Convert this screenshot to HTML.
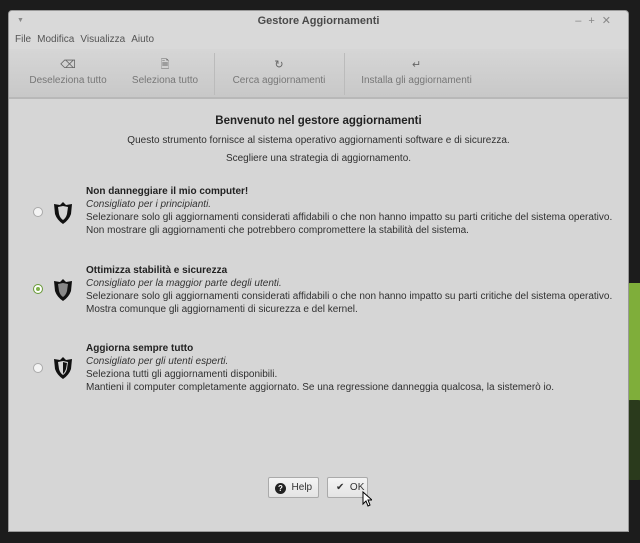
<!DOCTYPE html>
<html><head><style>
*{margin:0;padding:0;box-sizing:border-box}
body{width:640px;height:543px;background:#1c1c1c;position:relative;overflow:hidden;font-family:"Liberation Sans","DejaVu Sans",sans-serif;font-size:10px;color:#303030;white-space:nowrap}
.green{position:absolute;left:620px;top:283px;width:30px;height:120px;background:#7fae3a;border-radius:10px}
.green2{position:absolute;left:620px;top:400px;width:28px;height:80px;background:#2a3a1c;border-radius:10px}
.win{position:absolute;left:8px;top:10px;width:621px;height:522px;background:#d6d6d6;border:1px solid #999;border-radius:4px 4px 0 0;overflow:hidden}
.title{height:20px;background:#d9d9d9;text-align:center;font-weight:bold;font-size:11px;color:#4a4a4a;line-height:20px;position:relative}
.title .l{position:absolute;left:8px;top:0;font-size:7px;color:#888}
.title .r{position:absolute;right:10px;top:0;color:#888;font-weight:normal;letter-spacing:7px}
.menu{height:18px;background:#d9d9d9;font-size:10px;color:#555;padding-left:6px;line-height:18px}
.menu span{margin-right:6px}
.tb{height:50px;background:linear-gradient(#d6d6d6,#c8c8c8);border-bottom:2px solid #b8b8b8;position:relative;color:#777;font-size:10px}
.tb div{position:absolute;top:4px;text-align:center}
.tb i{display:block;font-style:normal;font-size:11px;color:#666;height:22px;line-height:24px}
.sep{position:absolute;top:4px;width:1px;height:42px;background:#bbb}
.h{position:absolute;width:100%;text-align:center}
.opt{position:absolute;left:77px;line-height:13px;font-size:10px}
.opt b{color:#222}
.opt em{color:#333}
.radio{position:absolute;left:24px;width:10px;height:10px;border-radius:50%;background:#f4f4f4;border:1px solid #aaa}
.btn{position:absolute;top:466px;height:21px;background:linear-gradient(#f4f4f4,#e4e4e4);border:1px solid #aaa;border-radius:2px;font-size:10px;line-height:19px;color:#333}
</style></head><body>
<div class="green"></div><div class="green2"></div>
<div class="win">
<div class="title"><span class="l">▼</span>Gestore Aggiornamenti<span class="r">–+✕</span></div>
<div class="menu"><span>File</span><span>Modifica</span><span>Visualizza</span><span>Aiuto</span></div>
<div class="tb">
<div style="left:17px;width:84px"><i>⌫</i>Deseleziona tutto</div>
<div style="left:120px;width:72px"><i>🗎</i>Seleziona tutto</div>
<div class="sep" style="left:205px"></div>
<div style="left:221px;width:98px"><i>↻</i>Cerca aggiornamenti</div>
<div class="sep" style="left:335px"></div>
<div style="left:350px;width:115px"><i>↵</i>Installa gli aggiornamenti</div>
</div>
<div class="h" style="top:104px;font-weight:bold;font-size:11.5px;color:#222">Benvenuto nel gestore aggiornamenti</div>
<div class="h" style="top:124px;font-size:10px">Questo strumento fornisce al sistema operativo aggiornamenti software e di sicurezza.</div>
<div class="h" style="top:142px;font-size:10px">Scegliere una strategia di aggiornamento.</div>

<div class="radio" style="top:196px"></div>
<svg style="position:absolute;left:44px;top:190px" width="20" height="24" viewBox="0 0 20 24"><path d="M10 1 L13 4 L19 3 L18 13 Q16 19 10 23 Q4 19 2 13 L1 3 L7 4 Z" fill="#111"/><path d="M10 5 L15 6 L14 13 Q13 17 10 19 Q7 17 6 13 L5 6 Z" fill="#d6d6d6"/></svg>
<div class="opt" style="top:174px"><b>Non danneggiare il mio computer!</b><br><em>Consigliato per i principianti.</em><br>Selezionare solo gli aggiornamenti considerati affidabili o che non hanno impatto su parti critiche del sistema operativo.<br>Non mostrare gli aggiornamenti che potrebbero compromettere la stabilità del sistema.</div>

<div class="radio" style="top:273px;background:#fff;border-color:#6a9a3a;box-shadow:inset 0 0 0 2px #fff,inset 0 0 0 5px #7fb04a"></div>
<svg style="position:absolute;left:44px;top:267px" width="20" height="24" viewBox="0 0 20 24"><path d="M10 1 L13 4 L19 3 L18 13 Q16 19 10 23 Q4 19 2 13 L1 3 L7 4 Z" fill="#111"/><path d="M10 5 L15 6 L14 13 Q13 17 10 19 Q7 17 6 13 L5 6 Z" fill="#888"/></svg>
<div class="opt" style="top:253px"><b>Ottimizza stabilità e sicurezza</b><br><em>Consigliato per la maggior parte degli utenti.</em><br>Selezionare solo gli aggiornamenti considerati affidabili o che non hanno impatto su parti critiche del sistema operativo.<br>Mostra comunque gli aggiornamenti di sicurezza e del kernel.</div>

<div class="radio" style="top:352px"></div>
<svg style="position:absolute;left:44px;top:345px" width="20" height="24" viewBox="0 0 20 24"><path d="M10 1 L13 4 L19 3 L18 13 Q16 19 10 23 Q4 19 2 13 L1 3 L7 4 Z" fill="#111"/><path d="M10 5 L15 6 L14 13 Q13 17 10 19 Q7 17 6 13 L5 6 Z" fill="#d6d6d6"/><path d="M10 6 L14 7 L13 13 Q12 16 10 18 Z" fill="#111"/></svg>
<div class="opt" style="top:331px"><b>Aggiorna sempre tutto</b><br><em>Consigliato per gli utenti esperti.</em><br>Seleziona tutti gli aggiornamenti disponibili.<br>Mantieni il computer completamente aggiornato. Se una regressione danneggia qualcosa, la sistemerò io.</div>

<div class="btn" style="left:259px;width:51px;padding-left:6px"><span style="display:inline-block;width:11px;height:11px;border-radius:50%;background:#222;color:#fff;font-size:8px;line-height:11px;text-align:center;font-weight:bold;vertical-align:-1px">?</span> &nbsp;Help</div>
<div class="btn" style="left:318px;width:41px;padding-left:8px">✔ &nbsp;OK</div>
</div>
<svg style="position:absolute;left:362px;top:491px" width="10" height="16" viewBox="0 0 10 16"><path d="M1 1 L1 13 L4 10 L6 15 L8 14 L6 9 L10 9 Z" fill="#fff" stroke="#000" stroke-width="1"/></svg>
</body></html>
